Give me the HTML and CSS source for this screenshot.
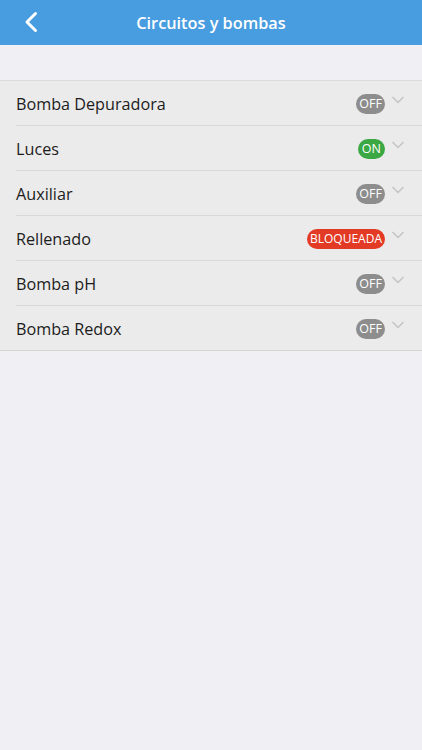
FILE: index.html
```html
<!DOCTYPE html>
<html lang="es">
<head>
    <meta charset="UTF-8">
    <meta name="viewport" content="width=device-width, initial-scale=1.0">
    <title>Circuitos y bombas</title>
    <link rel="stylesheet" href="styles.css">
</head>
<body>
    <header class="topbar">
        <button class="back" aria-label="Volver">
            <svg width="14" height="22" viewBox="0 0 14 22">
                <path d="M11.5 2.5 L3 11 L11.5 19.5" fill="none" stroke="#fff" stroke-width="3" stroke-linecap="round" stroke-linejoin="round"/>
            </svg>
        </button>
        <h1>Circuitos y bombas</h1>
    </header>

    <div class="spacer"></div>

    <ul class="list">
        <li class="row">
            <span class="name">Bomba Depuradora</span>
            <span class="badge off">OFF</span>
            <svg class="chev" width="14" height="10" viewBox="0 0 14 10"><path d="M1.5 2 L7 7.5 L12.5 2" fill="none" stroke="#c4c4c4" stroke-width="1.5"/></svg>
        </li>
        <li class="row">
            <span class="name">Luces</span>
            <span class="badge on">ON</span>
            <svg class="chev" width="14" height="10" viewBox="0 0 14 10"><path d="M1.5 2 L7 7.5 L12.5 2" fill="none" stroke="#c4c4c4" stroke-width="1.5"/></svg>
        </li>
        <li class="row">
            <span class="name">Auxiliar</span>
            <span class="badge off">OFF</span>
            <svg class="chev" width="14" height="10" viewBox="0 0 14 10"><path d="M1.5 2 L7 7.5 L12.5 2" fill="none" stroke="#c4c4c4" stroke-width="1.5"/></svg>
        </li>
        <li class="row">
            <span class="name">Rellenado</span>
            <span class="badge locked">BLOQUEADA</span>
            <svg class="chev" width="14" height="10" viewBox="0 0 14 10"><path d="M1.5 2 L7 7.5 L12.5 2" fill="none" stroke="#c4c4c4" stroke-width="1.5"/></svg>
        </li>
        <li class="row">
            <span class="name">Bomba pH</span>
            <span class="badge off">OFF</span>
            <svg class="chev" width="14" height="10" viewBox="0 0 14 10"><path d="M1.5 2 L7 7.5 L12.5 2" fill="none" stroke="#c4c4c4" stroke-width="1.5"/></svg>
        </li>
        <li class="row">
            <span class="name">Bomba Redox</span>
            <span class="badge off">OFF</span>
            <svg class="chev" width="14" height="10" viewBox="0 0 14 10"><path d="M1.5 2 L7 7.5 L12.5 2" fill="none" stroke="#c4c4c4" stroke-width="1.5"/></svg>
        </li>
    </ul>
</body>
</html>
```

FILE: styles.css
```css
body {
    margin: 0;
    font-family: "Open Sans", "Noto Sans", Arial, sans-serif;
    background-color: #efeff4;
    color: #1c1c1c;
    min-height: 750px;
}
.topbar {
    height: 45px;
    background-color: #489de0;
    display: flex;
    align-items: center;
    justify-content: center;
    position: relative;
}
.topbar h1 {
    margin: 0;
    color: #fff;
    font-size: 16.3px;
    font-weight: 600;
}
.back {
    position: absolute;
    left: 24px;
    top: 11px;
    padding: 0;
    border: none;
    background: none;
    display: flex;
}
.spacer {
    height: 35px;
}
.list {
    list-style: none;
    margin: 0;
    padding: 0 0 0 16px;
    background-color: #ebebeb;
    border-top: 1px solid #dcdcdc;
    border-bottom: 1px solid #d4d4d4;
}
.row {
    height: 44px;
    display: flex;
    align-items: center;
    padding-right: 17px;
    border-bottom: 1px solid #d8d8d8;
}
.row:last-child {
    border-bottom: none;
}
.name {
    flex: 1;
    font-size: 16.2px;
    margin-top: 1px;
}
.badge {
    height: 20px;
    line-height: 20px;
    padding: 0 3px;
    border-radius: 10px;
    color: #fff;
    font-size: 12.5px;
    margin-top: 2px;
}
.badge.off {
    background-color: #8d8d8d;
}
.badge.on {
    background-color: #3ba843;
    padding: 0 4px;
}
.badge.locked {
    background-color: #e33a26;
    padding: 0 3px;
    font-size: 12px;
}
.chev {
    margin-left: 6px;
    margin-top: -6px;
}
```
